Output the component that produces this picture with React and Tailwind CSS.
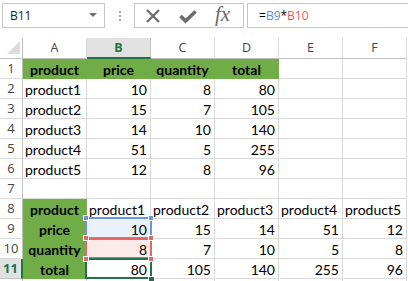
import React from "react";

const cols = ["A", "B", "C", "D", "E", "F"];

const G = "g"; // green bold centered
const rows = [
  [[G, "product"], [G, "price"], [G, "quantity"], [G, "total"], null, null],
  [["l", "product1"], ["r", "10"], ["r", "8"], ["r", "80"], null, null],
  [["l", "product2"], ["r", "15"], ["r", "7"], ["r", "105"], null, null],
  [["l", "product3"], ["r", "14"], ["r", "10"], ["r", "140"], null, null],
  [["l", "product4"], ["r", "51"], ["r", "5"], ["r", "255"], null, null],
  [["l", "product5"], ["r", "12"], ["r", "8"], ["r", "96"], null, null],
  [null, null, null, null, null, null],
  [[G, "product"], ["l", "product1"], ["l", "product2"], ["l", "product3"], ["l", "product4"], ["l", "product5"]],
  [[G, "price"], ["r", "10"], ["r", "15"], ["r", "14"], ["r", "51"], ["r", "12"]],
  [[G, "quantity"], ["r", "8"], ["r", "7"], ["r", "10"], ["r", "5"], ["r", "8"]],
  [[G, "total"], ["r", "80"], ["r", "105"], ["r", "140"], ["r", "255"], ["r", "96"]],
  [null, null, null, null, null, null],
];

function Handle({ className }) {
  return <div className={"absolute w-[6px] h-[6px] border border-white z-30 " + className} />;
}

function Cell({ data, r, c }) {
  const green = data && data[0] === G;
  let align = "justify-start pl-[2px]";
  if (data && data[0] === "r") align = "justify-end pr-[3px]";
  if (green) align = "justify-center";
  const base =
    "relative flex items-end pb-[1px] border-r border-b leading-none text-[14px] text-black " +
    (green ? "bg-[#70ad47] border-[#70ad47] font-bold " : "bg-white border-[#d9d9d9] ") +
    align;
  return (
    <div className={base} style={{ fontFamily: "Lato, 'Noto Sans', sans-serif" }}>
      {data && <span className="relative z-20 whitespace-nowrap">{data[1]}</span>}
      {r === 8 && c === 1 && (
        <>
          <div className="absolute -left-[2px] -top-[2px] -right-[2px] -bottom-[1px] border-2 border-[#6a96e0] bg-[#ebf1fb] z-10" />
          <Handle className="bg-[#6a96e0] -left-[4px] -top-[4px]" />
          <Handle className="bg-[#6a96e0] -right-[4px] -top-[4px]" />
        </>
      )}
      {r === 9 && c === 1 && (
        <>
          <div className="absolute -left-[2px] -top-[1px] -right-[2px] -bottom-[1px] border-2 border-[#e46666] bg-[#fce9e9] z-10" />
          <Handle className="bg-[#e46666] -left-[4px] -top-[4px]" />
          <Handle className="bg-[#e46666] -right-[4px] -top-[4px]" />
          <Handle className="bg-[#e46666] -left-[4px] -bottom-[4px]" />
          <Handle className="bg-[#e46666] -right-[4px] -bottom-[4px]" />
        </>
      )}
      {r === 10 && c === 1 && (
        <>
          <div className="absolute -left-[2px] -top-[1px] -right-[2px] -bottom-[1px] border-2 border-[#217346] z-10" />
          <div className="absolute w-[7px] h-[7px] bg-[#217346] border border-white -right-[5px] -bottom-[5px] z-30" />
        </>
      )}
    </div>
  );
}

export default function App() {
  const font = { fontFamily: "'Open Sans', 'Noto Sans', sans-serif" };
  return (
    <div className="w-[408px] h-[281px] bg-white overflow-hidden" style={font}>
      {/* formula bar */}
      <div className="h-[38px] flex items-start pt-[3px] pl-[2px]">
        <div className="w-[103px] h-[25px] border border-[#c6c6c6] flex items-center justify-between pl-[7px] pr-[7px] text-[12px] text-[#222]">
          <span>B11</span>
          <svg width="8" height="5" viewBox="0 0 8 5"><path d="M0 0 L8 0 L4 4 Z" fill="#6b6b6b" /></svg>
        </div>
        <div className="w-[29px] h-[25px] flex flex-col items-center justify-center gap-[2px]">
          <div className="w-[2px] h-[2px] bg-[#a6a6a6]" />
          <div className="w-[2px] h-[2px] bg-[#a6a6a6]" />
          <div className="w-[2px] h-[2px] bg-[#a6a6a6]" />
        </div>
        <div className="w-[110px] h-[25px] border border-[#c6c6c6] flex items-center pl-[10px] gap-[18px]">
          <svg width="16" height="16" viewBox="0 0 16 16">
            <path d="M2 2 L14 14 M14 2 L2 14" stroke="#6b6b6b" strokeWidth="2.2" fill="none" />
          </svg>
          <svg width="18" height="16" viewBox="0 0 18 16">
            <path d="M1.5 8 L6.5 13 L16.5 3.5" stroke="#6b6b6b" strokeWidth="3.6" fill="none" />
          </svg>
          <span className="italic text-[21px] leading-none text-[#6b6b6b] -mt-[3px]" style={{ fontFamily: "'Liberation Serif', 'DejaVu Serif', serif" }}>
            fx
          </span>
        </div>
        <div className="ml-[3px] flex-1 h-[25px] border border-r-0 border-[#c6c6c6] flex items-center pl-[11px] text-[12px] text-black">
          <span>=</span>
          <span className="text-[#5b8de4]">B9</span>
          <span>*</span>
          <span className="text-[#e35b62]">B10</span>
        </div>
      </div>

      {/* grid */}
      <div className="grid grid-cols-[23px_64px_64px_64px_64px_64px_64px] grid-rows-[21px_repeat(12,20px)]">
        {/* header row */}
        <div className="relative border-r border-b border-[#bfbfbf] bg-white">
          <svg className="absolute left-[7px] top-[3px]" width="13" height="13" viewBox="0 0 13 13">
            <path d="M13 0 L13 13 L0 13 Z" fill="#dcdcdc" />
          </svg>
        </div>
        {cols.map((c) =>
          c === "B" ? (
            <div key={c} className="flex items-center justify-center bg-[#e1e1e1] border-r border-[#bfbfbf] border-b-2 border-b-[#217346] text-[12.5px] font-bold text-[#217346] pt-[1px]">
              {c}
            </div>
          ) : (
            <div key={c} className="flex items-center justify-center bg-white border-r border-[#dadada] border-b border-b-[#bfbfbf] text-[12.5px] text-[#444] pt-[1px]">
              {c}
            </div>
          )
        )}
        {rows.map((row, r) => (
          <React.Fragment key={r}>
            {r === 10 ? (
              <div className="flex items-center justify-center bg-[#e1e1e1] border-r-2 border-r-[#217346] border-b border-b-[#bfbfbf] text-[13px] font-bold text-[#217346]">
                {r + 1}
              </div>
            ) : (
              <div className="flex items-center justify-center bg-white border-r border-r-[#bfbfbf] border-b border-b-[#dadada] text-[13px] text-[#444]">
                {r < 11 ? r + 1 : ""}
              </div>
            )}
            {row.map((d, c) => (
              <Cell key={c} data={d} r={r} c={c} />
            ))}
          </React.Fragment>
        ))}
      </div>
    </div>
  );
}
